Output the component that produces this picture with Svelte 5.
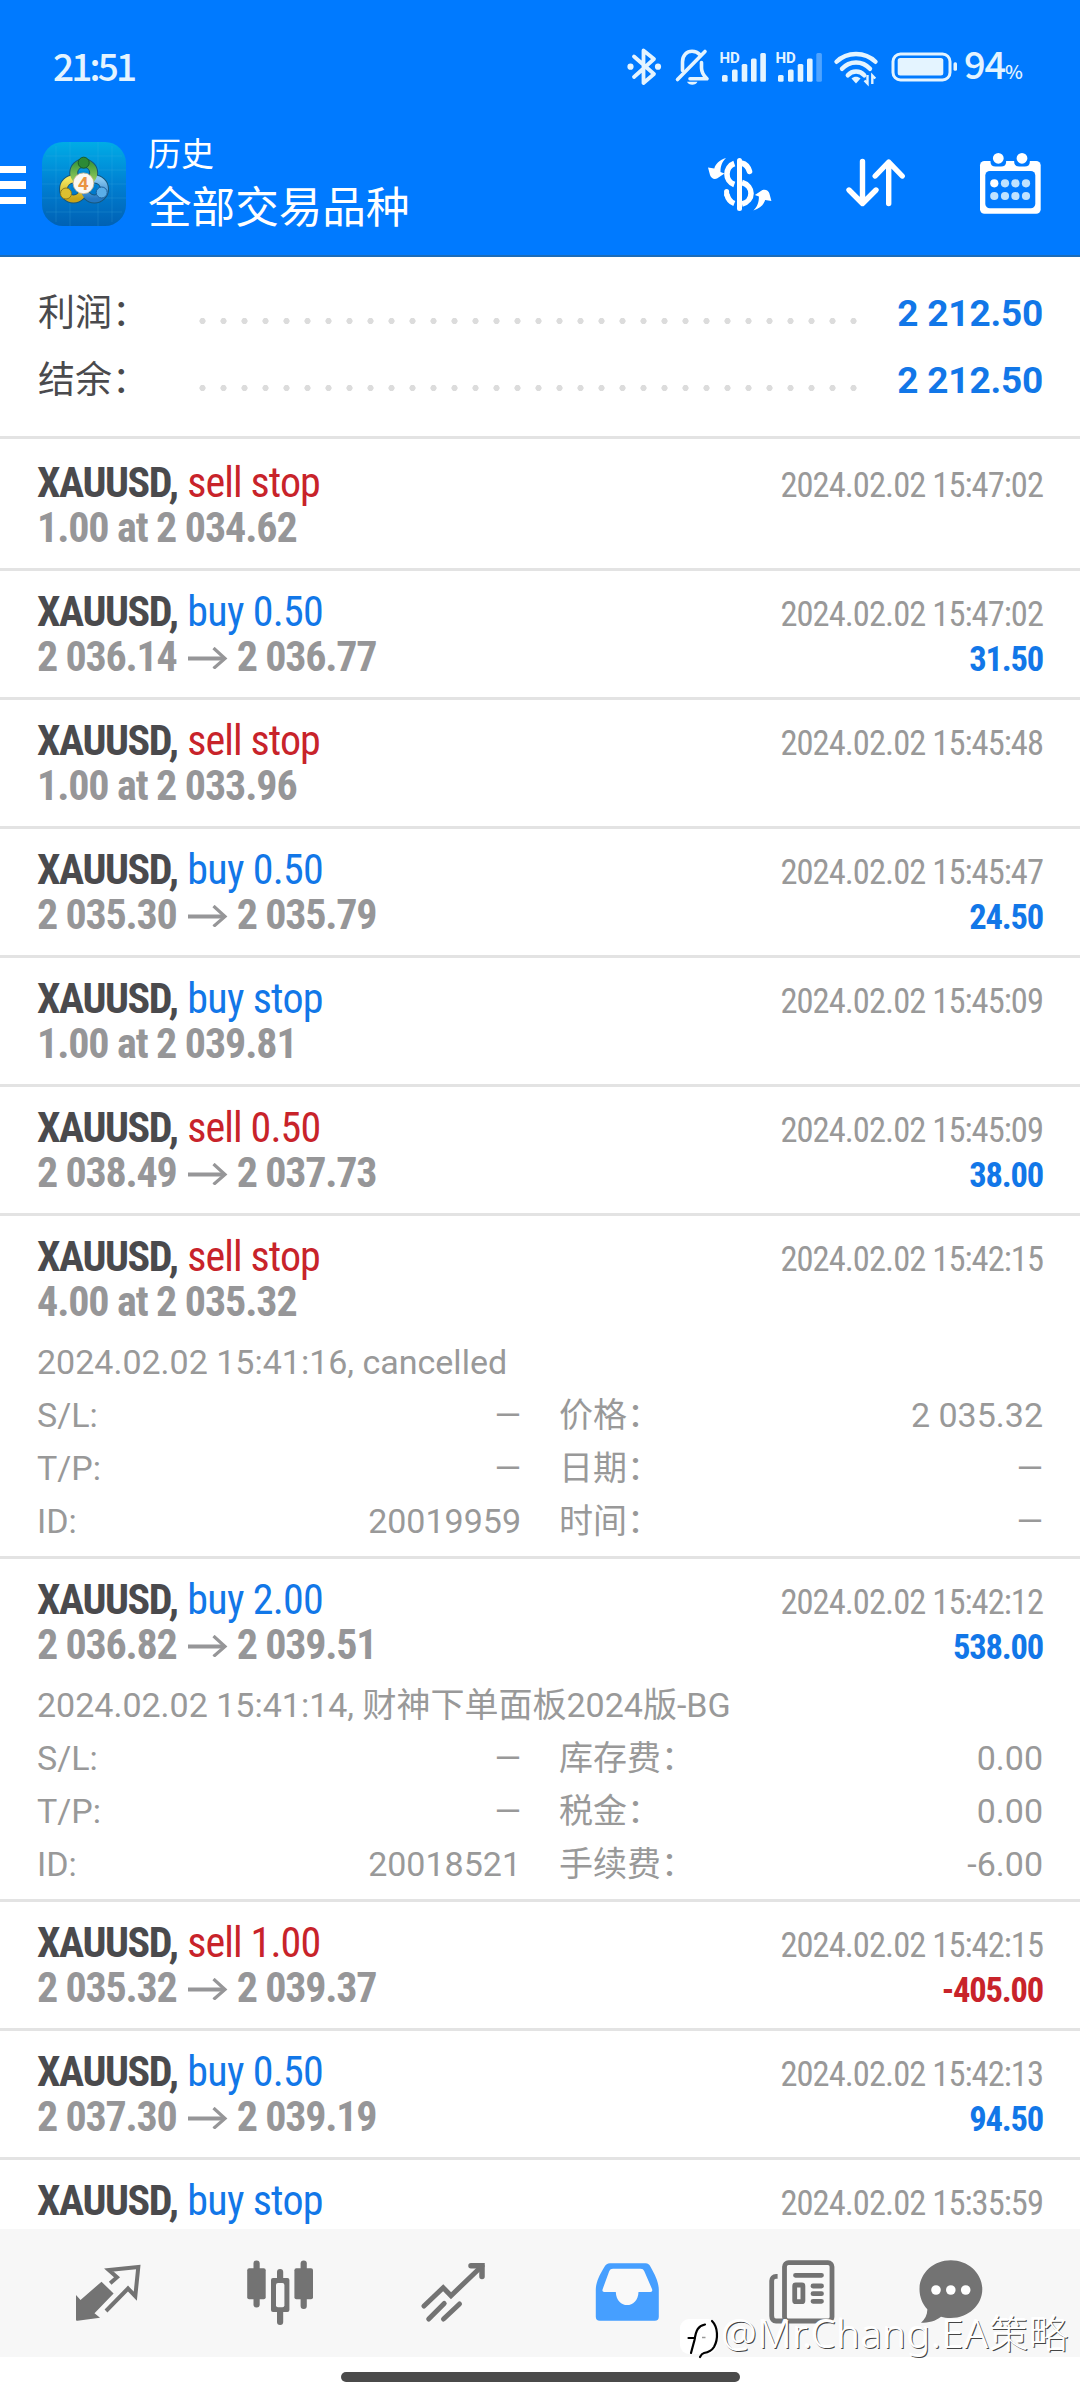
<!-- App.svelte – trade history screen -->
<script lang="ts">
  type Field = { label: string; value: string };
  type Deal = {
    symbol: string;
    side: 'buy' | 'sell';
    action: string;
    price?: string;
    close?: string;
    time: string;
    profit?: string;
    comment?: string;
    left?: Field[];
    right?: Field[];
  };

  const summary: Field[] = [
    { label: '利润：', value: '2 212.50' },
    { label: '结余：', value: '2 212.50' },
  ];

  const deals: Deal[] = [
    { symbol: 'XAUUSD', side: 'sell', action: 'sell stop', price: '1.00 at 2 034.62', time: '2024.02.02 15:47:02' },
    { symbol: 'XAUUSD', side: 'buy', action: 'buy 0.50', price: '2 036.14', close: '2 036.77', time: '2024.02.02 15:47:02', profit: '31.50' },
    { symbol: 'XAUUSD', side: 'sell', action: 'sell stop', price: '1.00 at 2 033.96', time: '2024.02.02 15:45:48' },
    { symbol: 'XAUUSD', side: 'buy', action: 'buy 0.50', price: '2 035.30', close: '2 035.79', time: '2024.02.02 15:45:47', profit: '24.50' },
    { symbol: 'XAUUSD', side: 'buy', action: 'buy stop', price: '1.00 at 2 039.81', time: '2024.02.02 15:45:09' },
    { symbol: 'XAUUSD', side: 'sell', action: 'sell 0.50', price: '2 038.49', close: '2 037.73', time: '2024.02.02 15:45:09', profit: '38.00' },
    {
      symbol: 'XAUUSD', side: 'sell', action: 'sell stop', price: '4.00 at 2 035.32', time: '2024.02.02 15:42:15',
      comment: '2024.02.02 15:41:16, cancelled',
      left: [{ label: 'S/L:', value: '—' }, { label: 'T/P:', value: '—' }, { label: 'ID:', value: '20019959' }],
      right: [{ label: '价格：', value: '2 035.32' }, { label: '日期：', value: '—' }, { label: '时间：', value: '—' }],
    },
    {
      symbol: 'XAUUSD', side: 'buy', action: 'buy 2.00', price: '2 036.82', close: '2 039.51', time: '2024.02.02 15:42:12', profit: '538.00',
      comment: '2024.02.02 15:41:14, 财神下单面板2024版-BG',
      left: [{ label: 'S/L:', value: '—' }, { label: 'T/P:', value: '—' }, { label: 'ID:', value: '20018521' }],
      right: [{ label: '库存费：', value: '0.00' }, { label: '税金：', value: '0.00' }, { label: '手续费：', value: '-6.00' }],
    },
    { symbol: 'XAUUSD', side: 'sell', action: 'sell 1.00', price: '2 035.32', close: '2 039.37', time: '2024.02.02 15:42:15', profit: '-405.00' },
    { symbol: 'XAUUSD', side: 'buy', action: 'buy 0.50', price: '2 037.30', close: '2 039.19', time: '2024.02.02 15:42:13', profit: '94.50' },
    { symbol: 'XAUUSD', side: 'buy', action: 'buy stop', time: '2024.02.02 15:35:59' },
  ];

  const bars = [
    { x: 3, y: 28 },
    { x: 13, y: 22.5 },
    { x: 22.7, y: 17 },
    { x: 32, y: 11.5 },
    { x: 41.3, y: 6 },
  ];
  // number of lit bars for each SIM
  const sims = [5, 4];
</script>

<div class="screen">
  <header>
    <div class="status">
      <span class="clock">21:51</span>
      <div class="status-icons">
        <svg width="35" height="40" viewBox="0 0 35 40">
          <path d="M7 9.5 27 27 16.500 36V3.500L27 12 7 30" fill="none" stroke="currentColor" stroke-width="3.800" stroke-linejoin="round" stroke-linecap="round" />
          <circle cx="3.500" cy="19.700" r="3.100" fill="currentColor" />
          <circle cx="31" cy="19.700" r="3.100" fill="currentColor" />
        </svg>
        <svg class="bell" width="37" height="40" viewBox="0 0 37 40">
          <g fill="none" stroke="currentColor" stroke-width="3.600" stroke-linecap="round" stroke-linejoin="round">
            <path d="M3.500 32.500 31 4.500" />
            <path d="M8.500 23.500V15C8.500 8 13 4.300 18 4.300c3.500 0 6 1.200 7.700 3.200" />
            <path d="M27.500 15.500V21c0 4 2 7.500 5.500 10.800H16" />
          </g>
          <path d="M13 34.800h10.500c-1.500 4-9 4-10.500 0z" fill="currentColor" />
        </svg>
        {#each sims as lit}
          <svg class="sim" width="48" height="40" viewBox="0 0 48 40" fill="currentColor">
            <text x="0.500" y="15.800" class="hd">HD</text>
            {#each bars as b, i}
              <rect x={b.x} y={b.y} width="5.600" height={34.7 - b.y} rx="1.500" opacity={i < lit ? 1 : 0.35} />
            {/each}
          </svg>
        {/each}
        <svg class="wifi" width="46" height="40" viewBox="0 0 46 40">
          <g fill="none" stroke="currentColor" stroke-width="4.400" stroke-linecap="round">
            <path d="M3.500 14.800C14 4.300 32 4.300 42.500 14.800" />
            <path d="M9 21.800c7.500-8.500 20.500-8.500 28 0" />
            <path d="M14.800 28.300c4.500-5 12-5 16.500 0" />
          </g>
          <path d="M18.500 31.500c2.500-2.500 6.500-2.500 9 0L23 36.500z" fill="currentColor" />
          <path d="M34.500 28v8.500l-3-3M39.300 37v-8.500l3 3" fill="none" stroke="currentColor" stroke-width="2.400" />
        </svg>
        <svg class="battery" width="68" height="40" viewBox="0 0 68 40">
          <rect x="2" y="7" width="57" height="26" rx="7.500" fill="none" stroke="currentColor" stroke-width="3" />
          <rect x="6.700" y="11" width="45.600" height="17.500" rx="2.500" fill="currentColor" />
          <rect x="62.500" y="15.300" width="3.500" height="8.500" rx="1.500" fill="currentColor" />
        </svg>
        <span class="percent">94<small>%</small></span>
      </div>
    </div>

    <div class="appbar">
      <div class="menu"><i></i><i></i><i></i></div>
      <svg class="logo" width="84" height="84" viewBox="0 0 84 84">
        <defs>
          <linearGradient id="sky" x1="0" y1="0" x2="0" y2="1">
            <stop offset="0" stop-color="#00ace6" />
            <stop offset="0.5" stop-color="#0080d2" />
            <stop offset="1" stop-color="#0061b4" />
          </linearGradient>
          <linearGradient id="green" x1="0" y1="0" x2="0" y2="1">
            <stop offset="0" stop-color="#3f9a3c" />
            <stop offset="1" stop-color="#9fd060" />
          </linearGradient>
          <linearGradient id="gold" x1="0" y1="0" x2="0" y2="1">
            <stop offset="0" stop-color="#f3e860" />
            <stop offset="1" stop-color="#c9a418" />
          </linearGradient>
          <linearGradient id="azure" x1="0" y1="0" x2="0" y2="1">
            <stop offset="0" stop-color="#8ccaf2" />
            <stop offset="1" stop-color="#2377c2" />
          </linearGradient>
        </defs>
        <rect width="84" height="84" rx="21" fill="url(#sky)" />
        <path d="M14 4v76M28 0v84M56 0v84M70 4v76M4 14h76M0 28h84M0 42h84M0 56h84M4 70h76" stroke="#4fc0ec" stroke-opacity="0.18" />
        <g fill="none" stroke="#17567a" stroke-width="9">
          <circle cx="41.700" cy="31" r="10" />
          <circle cx="31.500" cy="47" r="10" />
          <circle cx="52.500" cy="47" r="10" />
        </g>
        <g fill="none" stroke-width="7">
          <circle cx="31.500" cy="47" r="10" stroke="url(#gold)" />
          <circle cx="52.500" cy="47" r="10" stroke="url(#azure)" />
          <circle cx="41.700" cy="31" r="10" stroke="url(#green)" />
        </g>
        <circle cx="41.700" cy="20.700" r="5.500" fill="#2c8a35" stroke="#185c2a" />
        <circle cx="24" cy="51.500" r="5.500" fill="#dcc030" stroke="#8d7a1c" />
        <circle cx="59.700" cy="50.500" r="5.500" fill="#5aaee8" stroke="#1d5f9c" />
        <circle cx="41.500" cy="41.300" r="10.400" fill="#fbf8f3" stroke="#c9b48a" stroke-width="0.800" />
        <text x="41.300" y="48" class="four">4</text>
      </svg>
      <div class="titles">
        <span class="sub">历史</span>
        <span class="main">全部交易品种</span>
      </div>
      <div class="actions">
        <svg width="68" height="58" viewBox="0 0 68 58">
          <g fill="none" stroke="#fff" stroke-width="5.600">
            <path d="M28.300 8.500C18.500 12 18.500 26 28.300 29.500" />
            <path d="M36 8.300c3.500.7 6 3.500 7.500 8" stroke-linecap="round" />
            <path d="M36 27.500c12 3.500 12 18.500 0 21.500" />
            <path d="M20.800 39c1 4.500 3.500 8 7.500 9.500" />
          </g>
          <path d="M20.600 36.500v3" stroke="#fff" stroke-width="5" stroke-linecap="round" />
          <rect x="31" y="3" width="5" height="53" rx="2.500" fill="#fff" />
          <path d="M20 3C13.500 5 9.500 9 8.300 13.500L2 12.500l2 7.500c.8 3 4 4.800 7 3.500l7.500-5-4-1.500C14.500 11 16 7 20 3z" fill="#fff" />
          <path d="M20 3C13.500 5 9.500 9 8.300 13.500L2 12.500l2 7.500c.8 3 4 4.800 7 3.500l7.500-5-4-1.500C14.500 11 16 7 20 3z" fill="#fff" transform="rotate(180 33.700 29.300)" />
        </svg>
        <svg width="62" height="54" viewBox="0 0 62 54" fill="none" stroke="#fff" stroke-width="5.400" stroke-linecap="round" stroke-linejoin="round">
          <path d="M17.500 4.500V45.500M4 33l13.500 13.500L31 33" />
          <path d="M43.700 46.500V6M30.200 19 43.700 5l13.500 14" />
        </svg>
        <svg width="64" height="66" viewBox="0 0 64 66">
          <rect x="2" y="10" width="60.700" height="52.700" rx="4.500" fill="#fff" />
          <rect x="7.300" y="20" width="50" height="37.300" rx="4.500" fill="#007aff" />
          <g fill="#fff" stroke="#007aff" stroke-width="2.400">
            <path d="M12.500 10v1c0 3 2 4.500 5 4.500h5.600c3 0 5-1.500 5-4.500v-1z" fill="#007aff" stroke="none" />
            <path d="M36.200 10v1c0 3 2 4.500 5 4.500h5.600c3 0 5-1.500 5-4.500v-1z" fill="#007aff" stroke="none" />
            <circle cx="20.300" cy="7.300" r="6.600" />
            <circle cx="44" cy="7.300" r="6.600" />
          </g>
          {#each [32.3, 45] as cy, r}
            {#each [16.3, 27, 37.4, 48] as cx, c}
              <circle {cx} {cy} r="4.100" fill={r + c === 0 ? '#fff' : '#bfe2ff'} />
            {/each}
          {/each}
        </svg>
      </div>
    </div>
  </header>

  <section class="summary">
    {#each summary as row}
      <div class="sum-row">
        <span class="sum-label">{row.label}</span>
        <span class="dots"></span>
        <span class="sum-value">{row.value}</span>
      </div>
    {/each}
  </section>

  <main>
    {#each deals as d}
      <article class:open={d.comment}>
        <div class="line">
          <span class="name"><b>{d.symbol},</b> <span class={d.side}>{d.action}</span></span>
          <span class="time">{d.time}</span>
        </div>
        {#if d.price}
          <div class="line">
            <span class="price" class:pending={!d.close}>
              {d.price}{#if d.close}<svg class="arrow" width="40" height="22" viewBox="0 0 40 22" fill="none" stroke="#969698"><path d="M0 11.500H36" stroke-width="3.800" /><path d="M25.500 1 37 11.500 25.500 21.500" stroke-width="3.200" /></svg>{d.close}{/if}
            </span>
            {#if d.profit}
              <span class="profit" class:loss={d.profit.startsWith('-')}>{d.profit}</span>
            {/if}
          </div>
        {/if}
        {#if d.comment}
          <div class="details">
            <p>{d.comment}</p>
            <div class="cols">
              {#each [d.left, d.right] as fields}
                <div>
                  {#each fields ?? [] as f}
                    <div class="field"><span>{f.label}</span><span>{f.value}</span></div>
                  {/each}
                </div>
              {/each}
            </div>
          </div>
        {/if}
      </article>
    {/each}
  </main>

  <nav>
    <svg width="68" height="70" viewBox="0 0 68 70">
      <path d="M2 37l4.500 5L27.500 23.700 39.600 35.500 20.500 55.300l5.500 4.500L3.500 62.800C2.500 63 2 62.300 2 61.500z" fill="#737373" />
      <path d="M36.200 25.300 43 19.300 34.800 12 64.300 9 61.300 38.200 54 30.500 32 53" fill="none" stroke="#737373" stroke-width="4" />
    </svg>
    <svg width="70" height="70" viewBox="0 0 70 70" fill="#737373">
      <rect x="7.500" y="2.500" width="6.200" height="47" rx="3" />
      <rect x="1.200" y="10.300" width="18.500" height="31" rx="2" />
      <rect x="54.600" y="2.500" width="6.200" height="48.500" rx="3" />
      <rect x="48.400" y="10.300" width="18.600" height="31" rx="2" />
      <rect x="31" y="11" width="6.200" height="56" rx="3" />
      <rect x="25" y="20" width="18.400" height="34" rx="2" />
      <rect x="30" y="25" width="8.400" height="24.300" rx="2" fill="#f7f7f7" />
    </svg>
    <svg width="68" height="70" viewBox="0 0 68 70" fill="none" stroke="#737373" stroke-width="5" stroke-linecap="round">
      <path d="M4 48 23.200 29.700 31 37.700 62 8" />
      <path d="M51 7.700H62V18.500" stroke-width="5.500" />
      <path d="M8.700 61 24.200 45.500M23.500 61 39.500 46" />
    </svg>
    <svg class="inbox" width="68" height="70" viewBox="0 0 68 70">
      <path d="M16 5.300h35.500c2.500 0 4 1.200 5 3.500C61 17 64.800 24 64.800 32v26.700a4 4 0 0 1-4 4H5.800a4 4 0 0 1-4-4V32C1.800 24 5.600 17 10.500 8.800 11.700 6.500 13.500 5.300 16 5.300z" fill="#469fff" />
      <path d="M19 10.800h27.500c2 0 3 .8 3.800 2.500L58 31c.7 1.800 0 2.900-1.500 2.900H44.500c-.5 17.500-22.200 17.500-22.700 0H10.200c-1.500 0-2.200-1.100-1.500-2.900l6.500-17.700c.8-1.700 1.800-2.500 3.800-2.500z" fill="#f9f9f9" />
    </svg>
    <svg class="news" width="70" height="70" viewBox="0 0 70 70">
      <g fill="none" stroke="#737373" stroke-width="4.800">
        <path d="M9.600 18.300H8c-2.500 0-4.300 2-4.300 4.500V58c0 3 1.600 5 4.300 5h10" />
        <rect x="16.500" y="4.700" width="47.500" height="58.300" rx="4" fill="#f9f9f9" />
        <path d="M27.500 17.300H53.500M45 28h8.500M45 35.700h8.500M45 43.300h8.500" stroke-linecap="round" />
        <rect x="26.700" y="27" width="8.200" height="16.700" rx="1" />
      </g>
    </svg>
    <svg class="chat" width="68" height="70" viewBox="0 0 68 70">
      <path d="M32.800 2.300c17.500 0 31.500 13 31.500 29S50.300 60 32.800 60c-4 0-7.300-.5-9.800-1.300-5.500 4.500-12.500 6-20 6C7 61 9.500 56.500 9.300 51.300 4.500 46 1.500 39 1.500 31.300c0-16 13.800-29 31.300-29z" fill="#737373" />
      <g fill="#fff"><circle cx="18" cy="32" r="4.800" /><circle cx="32.800" cy="32" r="4.800" /><circle cx="47.700" cy="32" r="4.800" /></g>
    </svg>
  </nav>
  <div class="gesture"><i></i></div>

  <div class="watermark">
    <svg width="44" height="46" viewBox="0 0 44 46">
      <rect x="1" y="4" width="37" height="35" rx="9" fill="#fff" />
      <g fill="none" stroke="#000" stroke-linecap="round" stroke-width="2.200">
        <path d="M12 38 15.500 25C17 15 19 11 26 9.500" />
        <path d="M9.500 23h6" />
        <path d="M33 6c6 6 6.500 18 2 26-2.500 4-7 5.500-10 6-2 .5-3 2-4 4" />
      </g>
      <path d="M23 22.500h3.500" stroke="#999" stroke-width="1.500" />
    </svg>
    <span>@Mr.Chang.EA策略</span>
  </div>
</div>

<style>
  :global(body) { background: #fff; }
  .screen { position: relative; width: 1080px; height: 2400px; overflow: hidden; display: flex; flex-direction: column; background: #fff; font-family: Roboto, "Noto Sans CJK SC", sans-serif; }
  svg { display: block; flex: none; }

  header { flex: none; box-sizing: border-box; height: 257px; background: #007aff; border-bottom: 2px solid #1c6cb8; color: #fff; }
  .status { height: 134px; box-sizing: border-box; padding: 0 57px 0 53px; display: flex; align-items: center; justify-content: space-between; color: #e4f4ff; }
  .clock { font: 500 37px/40px "Noto Sans CJK SC", sans-serif; letter-spacing: -2.8px; padding-bottom: 4px; }
  .status-icons { display: flex; align-items: center; }
  .bell { margin-left: 12px; }
  .sim { margin-left: 8px; }
  .wifi { margin-left: 10px; }
  .battery { margin-left: 12px; }
  .percent { margin-left: 5px; width: 59px; white-space: nowrap; font: 500 38px/40px "Noto Sans CJK SC", sans-serif; letter-spacing: -1.2px; }
  .percent small { font-size: 19px; }
  .hd { font: 700 15px Roboto, sans-serif; }

  .appbar { height: 100px; display: flex; align-items: center; padding-right: 38px; }
  .menu { width: 26px; display: flex; flex-direction: column; gap: 8.3px; padding-top: 2px; }
  .menu i { height: 7.4px; background: #fff; }
  .logo { margin-left: 16px; }
  .four { font: 700 19px Roboto, sans-serif; fill: #ea9440; text-anchor: middle; }
  .titles { margin-left: 22px; display: flex; flex-direction: column; padding-top: 1px; }
  .sub { font-size: 33px; line-height: 48px; }
  .main { font-size: 43.6px; line-height: 60px; }
  .actions { margin-left: auto; display: flex; align-items: center; gap: 71px; }

  .summary { flex: none; padding: 23px 38px 22px 38px; border-bottom: 3px solid #e3e3e3; }
  .sum-row { display: flex; height: 67px; line-height: 67px; }
  .sum-label { width: 154px; font-size: 37px; color: #4a4a4d; }
  .dots { width: 672px; height: 6px; margin-top: 38px; background: radial-gradient(circle, #dcdcdc 2.8px, transparent 3.4px) 0 0 / 21px 6px repeat-x; }
  .sum-value { margin: 0 -1px 0 auto; font-size: 37px; font-weight: 700; letter-spacing: -0.2px; color: #1277e8; white-space: nowrap; }

  main { flex: 1; min-height: 0; overflow: hidden; font-family: "Roboto Condensed", "Noto Sans CJK SC", sans-serif; }
  article { padding: 18px 37px 18px; border-bottom: 3px solid #e3e3e3; }
  article:first-child { padding-top: 21px; }
  article.open { padding-bottom: 8px; }
  .line { display: flex; justify-content: space-between; align-items: baseline; height: 45px; line-height: 45px; font-size: 42px; white-space: nowrap; }
  .name b { color: #4a4a4d; letter-spacing: -1.4px; margin-right: 1px; }
  .name { letter-spacing: -0.9px; }
  .buy { color: #1277e8; letter-spacing: -0.7px; }
  .sell { color: #c8232a; }
  .time { font-size: 34.5px; letter-spacing: -0.95px; color: #999; }
  .price { display: flex; font-weight: 700; color: #969698; letter-spacing: -1.2px; }
  .price.pending { letter-spacing: -1.1px; }
  .arrow { margin: 13px 9px 0 11px; }
  .profit { font-size: 34.5px; font-weight: 700; letter-spacing: -1.2px; color: #1277e8; }
  .profit.loss { color: #c8232a; }

  .details { margin-top: 12px; font: 34px/53px Roboto, "Noto Sans CJK SC", sans-serif; color: #999; }
  .details p { margin: 0; height: 53px; }
  .cols { display: grid; grid-template-columns: 484px 484px; gap: 38px; }
  .field { display: flex; justify-content: space-between; height: 53px; }

  nav { flex: none; box-sizing: border-box; height: 128px; padding: 29px 0 0 74px; display: flex; gap: 104px; background: #f7f7f7; }
  .inbox { margin-left: 2px; }
  .news { margin-left: 2px; }
  .chat { margin-left: -24px; }
  .gesture { flex: none; height: 43px; display: flex; justify-content: center; padding-top: 15px; box-sizing: border-box; }
  .gesture i { width: 399px; height: 10px; border-radius: 5px; background: #4a4a4a; }

  .watermark { position: absolute; left: 679px; top: 2315px; display: flex; align-items: flex-start; }
  .watermark span { margin: -2px 0 0 -1px; font: 300 39px/40px "Noto Sans", "Noto Sans CJK SC", sans-serif; letter-spacing: 1px; color: #fff; text-shadow: 1px 1px 0 #444, -1px -1px 0 #fff; white-space: nowrap; }
</style>
